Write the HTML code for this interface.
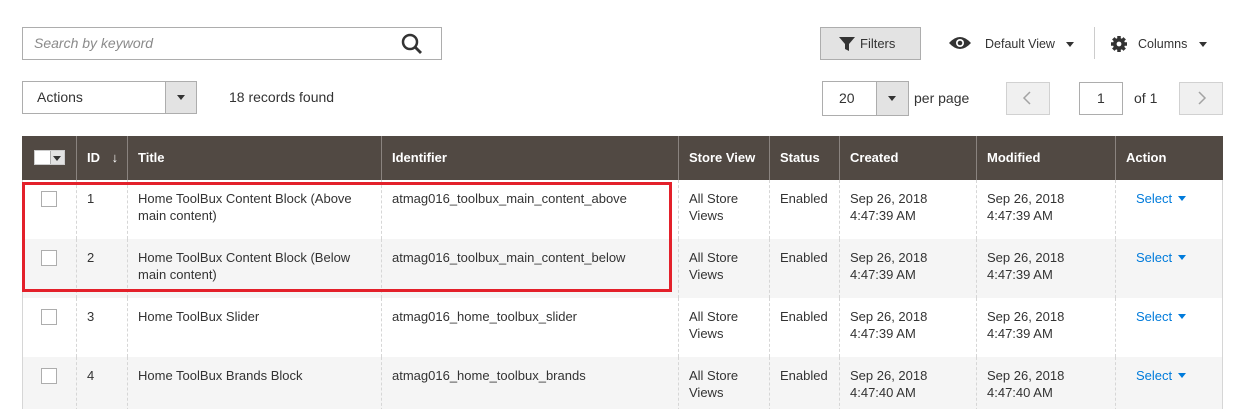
<!DOCTYPE html>
<html><head><meta charset="utf-8"><style>
*{box-sizing:border-box;margin:0;padding:0}
html,body{width:1248px;height:409px;overflow:hidden}
body{background:#fff;font-family:"Liberation Sans",sans-serif;font-size:13px;color:#333;position:relative}
.a{position:absolute}
.hd{position:absolute;top:136px;height:44px;background:#514943;color:#fff;font-weight:bold;font-size:13px;line-height:44px}
.hd div{position:absolute;top:0;height:44px;padding-left:10px;border-left:1px solid #8a837f}
.row{position:absolute;left:22px;width:1201px;height:59px;border-left:1px solid #d6d6d6;border-right:1px solid #d6d6d6}
.row div{position:absolute;top:0;height:59px;padding:10px 10px 0 10px;line-height:17px;border-left:1px dashed #d6d6d6}
.cb{position:absolute;left:18px;top:11px;width:16px;height:16px;border:1px solid #adadad;background:#fff}
.sel{color:#007bdb}
.sel i{display:inline-block;margin-left:6px;vertical-align:2px;border:4px solid transparent;border-top:5px solid #007bdb;border-bottom:0}
</style></head><body>
<div class="a" style="left:22px;top:27px;width:420px;height:33px;border:1px solid #adadad"></div>
<div class="a" style="left:34px;top:35px;font-style:italic;color:#8a8a8a;font-size:14px">Search by keyword</div>
<svg class="a" style="left:400px;top:32px" width="24" height="24" viewBox="0 0 24 24"><circle cx="10" cy="10" r="7" fill="none" stroke="#333" stroke-width="2.5"/><path d="M15 15l6 6" stroke="#333" stroke-width="2.8"/></svg>

<div class="a" style="left:820px;top:27px;width:101px;height:33px;border:1px solid #adadad;background:#e3e3e3"></div>
<svg class="a" style="left:838px;top:36px" width="18" height="16" viewBox="0 0 18 16"><path d="M1 1h16l-6 7v7l-4-2V8z" fill="#333"/></svg>
<div class="a" style="left:860px;top:36px;font-size:13px;color:#333">Filters</div>
<svg class="a" style="left:948px;top:35px" width="24" height="16" viewBox="0 0 24 16"><path d="M1 8Q12-4 23 8Q12 20 1 8z" fill="#333"/><circle cx="12" cy="8" r="4" fill="#fff"/><circle cx="12" cy="8" r="2.3" fill="#333"/></svg>
<div class="a" style="left:985px;top:37px;font-size:12.5px">Default View</div>
<div class="a" style="left:1066px;top:42px;border:4px solid transparent;border-top:5px solid #333"></div>
<div class="a" style="left:1094px;top:27px;width:1px;height:32px;background:#ccc"></div>
<svg class="a" style="left:1110px;top:35px" width="18" height="18" viewBox="0 0 18 18"><circle cx="9" cy="9" r="6" fill="#333"/><g stroke="#333" stroke-width="3.5"><path d="M9 1v16M1 9h16M3.3 3.3l11.4 11.4M14.7 3.3L3.3 14.7"/></g><circle cx="9" cy="9" r="2.4" fill="#fff"/></svg>
<div class="a" style="left:1138px;top:37px;font-size:12.5px">Columns</div>
<div class="a" style="left:1199px;top:42px;border:4px solid transparent;border-top:5px solid #333"></div>

<div class="a" style="left:22px;top:81px;width:175px;height:33px;border:1px solid #adadad"></div>
<div class="a" style="left:165px;top:82px;width:31px;height:31px;background:#e3e3e3;border-left:1px solid #adadad"></div>
<div class="a" style="left:177px;top:95px;border:4px solid transparent;border-top:5px solid #333"></div>
<div class="a" style="left:37px;top:89px;font-size:14px">Actions</div>
<div class="a" style="left:229px;top:89px;font-size:14px">18 records found</div>

<div class="a" style="left:822px;top:81px;width:87px;height:35px;border:1px solid #adadad"></div>
<div class="a" style="left:876px;top:82px;width:32px;height:33px;background:#e3e3e3;border-left:1px solid #adadad"></div>
<div class="a" style="left:888px;top:96px;border:4px solid transparent;border-top:5px solid #333"></div>
<div class="a" style="left:839px;top:90px;font-size:14px">20</div>
<div class="a" style="left:914px;top:90px;font-size:14px">per page</div>
<div class="a" style="left:1006px;top:82px;width:44px;height:33px;border:1px solid #d1d1d1;background:#f0f0f0"></div>
<svg class="a" style="left:1022px;top:90px" width="10" height="16"><path d="M8 2L2 8l6 6" fill="none" stroke="#a3a3a3" stroke-width="1.5"/></svg>
<div class="a" style="left:1079px;top:82px;width:44px;height:33px;border:1px solid #adadad"></div>
<div class="a" style="left:1097px;top:90px;font-size:14px">1</div>
<div class="a" style="left:1134px;top:90px;font-size:14px">of 1</div>
<div class="a" style="left:1179px;top:82px;width:44px;height:33px;border:1px solid #d1d1d1;background:#f0f0f0"></div>
<svg class="a" style="left:1197px;top:90px" width="10" height="16"><path d="M2 2l6 6-6 6" fill="none" stroke="#a3a3a3" stroke-width="1.5"/></svg>

<div class="hd" style="left:22px;width:1201px">
<div style="left:0;width:54px;border:none"></div>
<div style="left:54px">ID <span style="font-weight:normal;margin-left:8px">↓</span></div>
<div style="left:105px">Title</div>
<div style="left:359px">Identifier</div>
<div style="left:656px">Store View</div>
<div style="left:747px">Status</div>
<div style="left:817px">Created</div>
<div style="left:954px">Modified</div>
<div style="left:1093px">Action</div>
</div>
<div class="a" style="left:34px;top:150px;width:31px;height:15px;background:#fff;border:1px solid #ccc"></div>
<div class="a" style="left:50px;top:151px;width:14px;height:13px;background:#e3e3e3;border-left:1px solid #adadad"></div>
<div class="a" style="left:53px;top:156px;border:4px solid transparent;border-top:5px solid #333"></div>

<div class="row" style="top:180px;background:#fff">
<span class="cb"></span>
<div style="left:53px">1</div><div style="left:104px">Home ToolBux Content Block (Above<br>main content)</div><div style="left:358px">atmag016_toolbux_main_content_above</div><div style="left:655px">All Store<br>Views</div><div style="left:746px">Enabled</div><div style="left:816px">Sep 26, 2018<br>4:47:39 AM</div><div style="left:953px">Sep 26, 2018<br>4:47:39 AM</div><div style="left:1092px;padding-left:20px" class="sel">Select<i></i></div>
</div>
<div class="row" style="top:239px;background:#f5f5f5">
<span class="cb"></span>
<div style="left:53px">2</div><div style="left:104px">Home ToolBux Content Block (Below<br>main content)</div><div style="left:358px">atmag016_toolbux_main_content_below</div><div style="left:655px">All Store<br>Views</div><div style="left:746px">Enabled</div><div style="left:816px">Sep 26, 2018<br>4:47:39 AM</div><div style="left:953px">Sep 26, 2018<br>4:47:39 AM</div><div style="left:1092px;padding-left:20px" class="sel">Select<i></i></div>
</div>
<div class="row" style="top:298px;background:#fff">
<span class="cb"></span>
<div style="left:53px">3</div><div style="left:104px">Home ToolBux Slider</div><div style="left:358px">atmag016_home_toolbux_slider</div><div style="left:655px">All Store<br>Views</div><div style="left:746px">Enabled</div><div style="left:816px">Sep 26, 2018<br>4:47:39 AM</div><div style="left:953px">Sep 26, 2018<br>4:47:39 AM</div><div style="left:1092px;padding-left:20px" class="sel">Select<i></i></div>
</div>
<div class="row" style="top:357px;background:#f5f5f5;height:60px">
<span class="cb"></span>
<div style="left:53px">4</div><div style="left:104px">Home ToolBux Brands Block</div><div style="left:358px">atmag016_home_toolbux_brands</div><div style="left:655px">All Store<br>Views</div><div style="left:746px">Enabled</div><div style="left:816px">Sep 26, 2018<br>4:47:40 AM</div><div style="left:953px">Sep 26, 2018<br>4:47:40 AM</div><div style="left:1092px;padding-left:20px" class="sel">Select<i></i></div>
</div>
<div class="a" style="left:22px;top:182px;width:650px;height:110px;border:3px solid #e3202a"></div>
</body></html>
